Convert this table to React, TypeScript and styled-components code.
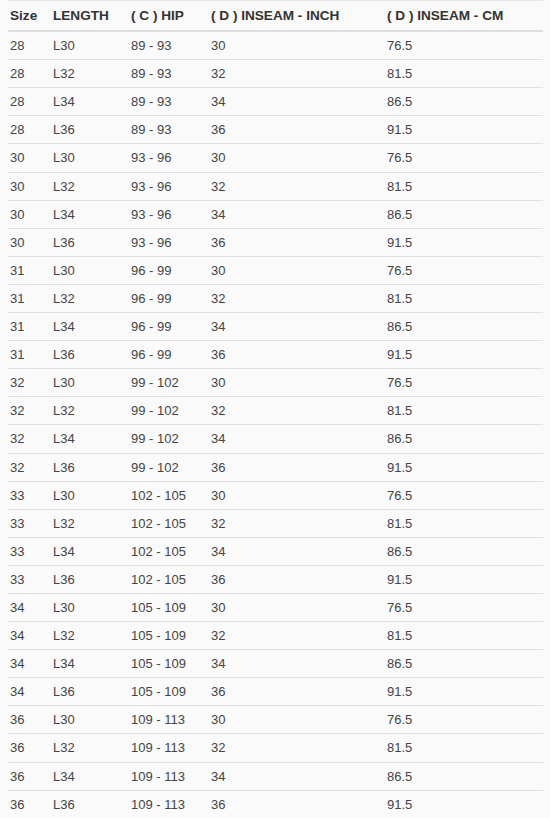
import styled, { createGlobalStyle } from "styled-components";

/*
 * SIZE CHART TABLE
 */

const GlobalStyle = createGlobalStyle`
  html, body {
    margin: 0;
    padding: 0;
    background: #fafafa;
  }
  body {
    font-family: "Liberation Sans", Arial, Helvetica, sans-serif;
    font-size: 13px;
    color: #444;
  }
`;

const hips: Record<string, string> = {
    "28": "89 - 93",
    "30": "93 - 96",
    "31": "96 - 99",
    "32": "99 - 102",
    "33": "102 - 105",
    "34": "105 - 109",
    "36": "109 - 113",
};

const lengths = [
    { len: "L30", inch: "30", cm: "76.5" },
    { len: "L32", inch: "32", cm: "81.5" },
    { len: "L34", inch: "34", cm: "86.5" },
    { len: "L36", inch: "36", cm: "91.5" },
];

const rows = Object.keys(hips).flatMap((size) =>
    lengths.map((l) => ({ size, hip: hips[size], ...l }))
);

const columns = [
    { label: "Size", width: 43 },
    { label: "LENGTH", width: 78 },
    { label: "( C ) HIP", width: 80 },
    { label: "( D ) INSEAM - INCH", width: 176 },
    { label: "( D ) INSEAM - CM", width: 158 },
];

const App = () => {
    return (
        <>
            <GlobalStyle />
            <Wrapper>
                <SizeTable>
                    <colgroup>
                        {columns.map((c) => (
                            <col key={c.label} style={{ width: c.width }} />
                        ))}
                    </colgroup>
                    <thead>
                        <tr>
                            {columns.map((c) => (
                                <HeadCell key={c.label}>{c.label}</HeadCell>
                            ))}
                        </tr>
                    </thead>
                    <tbody>
                        {rows.map((r, i) => (
                            <tr key={i}>
                                <Cell>{r.size}</Cell>
                                <Cell>{r.len}</Cell>
                                <Cell>{r.hip}</Cell>
                                <Cell>{r.inch}</Cell>
                                <Cell>{r.cm}</Cell>
                            </tr>
                        ))}
                    </tbody>
                </SizeTable>
            </Wrapper>
        </>
    );
};

const Wrapper = styled.div`
  padding: 0 7px 0 8px;
`;

const SizeTable = styled.table`
  width: 535px;
  border-collapse: collapse;
  border-spacing: 0;
  table-layout: fixed;
`;

const HeadCell = styled.th`
  text-align: left;
  font-weight: bold;
  font-size: 13.6px;
  color: #333;
  padding: 5px 2px;
  line-height: 19.1px;
  border-top: 1px solid #e4e4e4;
  border-bottom: 2px solid #dddddd;
  white-space: nowrap;
`;

const Cell = styled.td`
  text-align: left;
  padding: 4px 2px;
  line-height: 19.1px;
  border-top: 1px solid #e0e0e0;
  white-space: nowrap;
`;

export default App;
